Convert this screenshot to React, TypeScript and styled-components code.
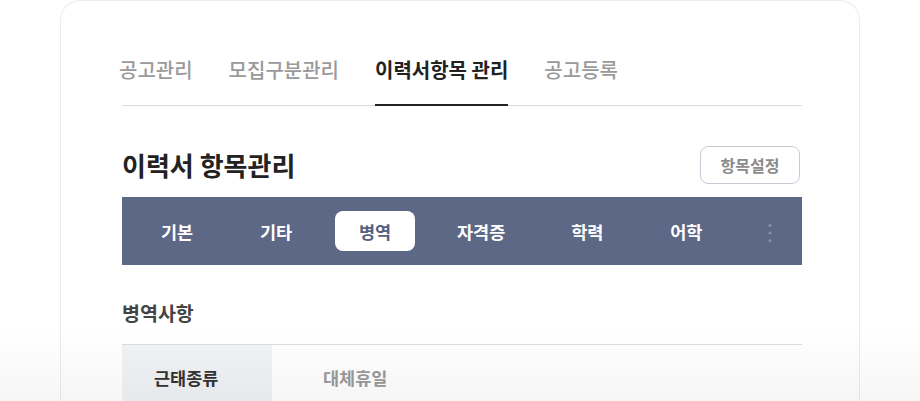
import styled, { createGlobalStyle } from "styled-components";

const GlobalStyle = createGlobalStyle`
    html, body {
        margin: 0;
        padding: 0;
        background: #fff;
        overflow: hidden;
        font-family: "Noto Sans CJK KR", "Noto Sans", sans-serif;
    }
    * { box-sizing: border-box; }
`;

const topTabs = ["공고관리", "모집구분관리", "이력서항목 관리", "공고등록"];
const navItems = ["기본", "기타", "병역", "자격증", "학력", "어학"];

const App = () => {
    return (
        <>
            <GlobalStyle />
            <Page>
                <Card>
                    <TabBar>
                        {topTabs.map((t) => (
                            <TabItem key={t} $active={t === "이력서항목 관리"}>{t}</TabItem>
                        ))}
                    </TabBar>

                    <TitleRow>
                        <Title>이력서 항목관리</Title>
                        <SettingButton>항목설정</SettingButton>
                    </TitleRow>

                    <CategoryNav>
                        {navItems.map((n) => (
                            <NavItem key={n} $active={n === "병역"}>{n}</NavItem>
                        ))}
                        <MoreButton>
                            <svg width="4" height="20" viewBox="0 0 4 20">
                                <circle cx="2" cy="2.5" r="1.6" fill="#8590aa" />
                                <circle cx="2" cy="10" r="1.6" fill="#8590aa" />
                                <circle cx="2" cy="17.5" r="1.6" fill="#8590aa" />
                            </svg>
                        </MoreButton>
                    </CategoryNav>

                    <SectionTitle>병역사항</SectionTitle>

                    <Table>
                        <Row>
                            <HeadCell>근태종류</HeadCell>
                            <ValueCell>대체휴일</ValueCell>
                        </Row>
                    </Table>
                </Card>
            </Page>
            <BottomFade />
        </>
    );
};

export default App;

const Page = styled.div`
    display: flex;
    justify-content: center;
    width: 100%;
    height: 401px;
`;

const Card = styled.div`
    display: flex;
    flex-direction: column;
    width: 800px;
    height: 401px;
    padding: 47px 57px 0 61px;
    border: 1px solid #ebebeb;
    border-bottom: none;
    border-radius: 20px 20px 0 0;
    background: #fff;
    overflow: hidden;
`;

const TabBar = styled.div`
    display: flex;
    flex-shrink: 0;
    gap: 36px;
    border-bottom: 1px solid #dcdcdc;
`;

const TabItem = styled.div<{ $active?: boolean }>`
    padding: 10px 0 22px;
    margin-bottom: -1px;
    font-size: 20px;
    line-height: 24px;
    font-weight: ${(p) => (p.$active ? 700 : 500)};
    color: ${(p) => (p.$active ? "#222" : "#9a9a9a")};
    border-bottom: 2px solid ${(p) => (p.$active ? "#222" : "transparent")};
    white-space: nowrap;
    &:first-child { margin-left: -3px; }
`;

const TitleRow = styled.div`
    display: flex;
    flex-shrink: 0;
    align-items: center;
    justify-content: space-between;
    height: 38px;
    margin-top: 40px;
`;

const Title = styled.h1`
    margin: 0;
    font-size: 26px;
    line-height: 32px;
    font-weight: 700;
    color: #222;
`;

const SettingButton = styled.button`
    width: 100px;
    height: 38px;
    margin-right: 2px;
    border: 1px solid #cacad6;
    border-radius: 8px;
    background: #fff;
    font-family: inherit;
    font-size: 16px;
    font-weight: 700;
    color: #8b8b8b;
`;

const CategoryNav = styled.div`
    display: flex;
    flex-shrink: 0;
    align-items: center;
    gap: 19px;
    height: 68px;
    margin-top: 13px;
    padding: 0 30px 0 15px;
    background: #5d6886;
`;

const NavItem = styled.div<{ $active?: boolean }>`
    display: flex;
    align-items: center;
    justify-content: center;
    min-width: 80px;
    height: 40px;
    padding: 0 23px;
    border-radius: 8px;
    font-size: 17.5px;
    font-weight: 700;
    color: ${(p) => (p.$active ? "#56617e" : "#fff")};
    background: ${(p) => (p.$active ? "#fff" : "transparent")};
`;

const MoreButton = styled.div`
    display: flex;
    align-items: center;
    margin-left: auto;
    padding-top: 3px;
`;

const SectionTitle = styled.h2`
    flex-shrink: 0;
    margin: 36px 0 0;
    font-size: 19.5px;
    line-height: 24px;
    font-weight: 700;
    color: #444;
`;

const Table = styled.div`
    display: flex;
    flex-direction: column;
    flex-shrink: 0;
    margin-top: 19px;
    border-top: 1px solid #dcdcdc;
`;

const Row = styled.div`
    display: flex;
    align-items: stretch;
    height: 64px;
`;

const HeadCell = styled.div`
    display: flex;
    align-items: center;
    width: 150px;
    padding-left: 32px;
    background: #f1f2f6;
    font-size: 17.5px;
    font-weight: 700;
    color: #333;
`;

const ValueCell = styled.div`
    display: flex;
    align-items: center;
    padding-left: 51px;
    font-size: 17.5px;
    font-weight: 700;
    color: #9a9a9a;
`;

const BottomFade = styled.div`
    position: fixed;
    left: 0;
    right: 0;
    bottom: 0;
    height: 72px;
    pointer-events: none;
    background: linear-gradient(to bottom, rgba(0, 0, 0, 0), rgba(0, 0, 0, 0.035));
`;
